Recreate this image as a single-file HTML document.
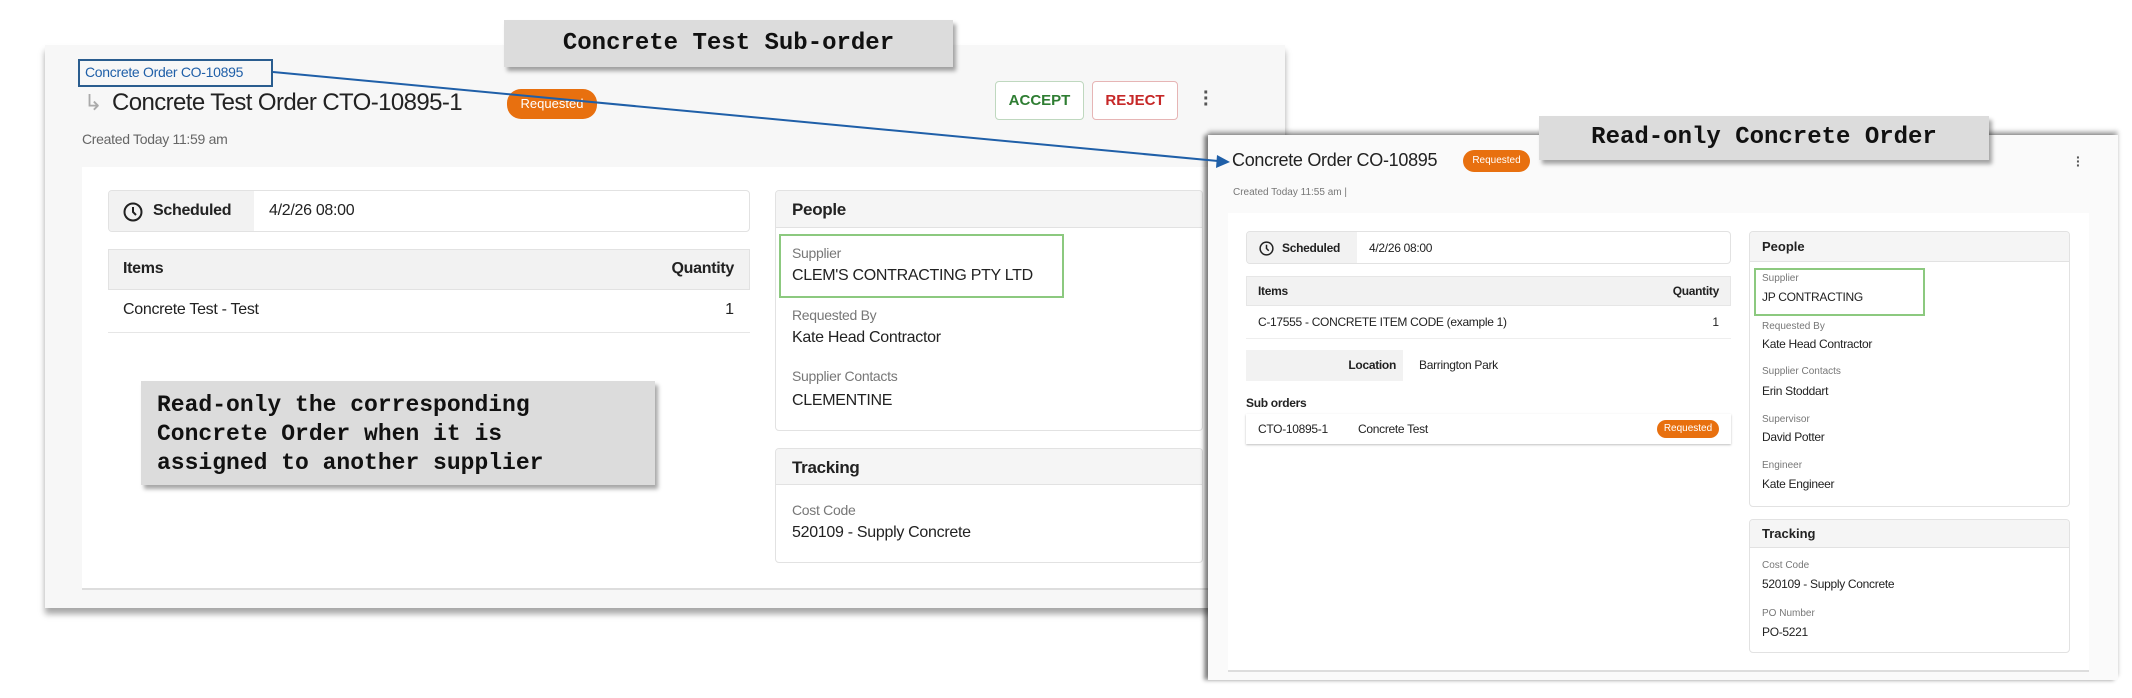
<!DOCTYPE html>
<html><head><meta charset="utf-8"><style>
*{box-sizing:border-box;margin:0;padding:0}
body{width:2132px;height:698px;background:#fff;position:relative;overflow:hidden;font-family:"Liberation Sans",sans-serif;color:#222}
.a{position:absolute}
.panel{background:#f7f7f7}
.card{background:#fff;border:1px solid #e2e2e2;border-radius:4px}
.note{background:#dcdcdc;font-family:"Liberation Mono",monospace;font-weight:bold;color:#111;box-shadow:3px 4px 4px rgba(0,0,0,.35)}
.badge{background:#e8700f;color:#fff;border-radius:14px;text-align:center}
.lbl{color:#777}
.hdr{background:#f5f5f5;border-bottom:1px solid #e2e2e2;font-weight:bold}
.c{letter-spacing:-0.3px}
</style></head><body>

<!-- LEFT PANEL -->
<div class="a panel" style="left:45px;top:45px;width:1240px;height:563px;box-shadow:0 6px 6px rgba(0,0,0,.35)"></div>
<div class="a" style="left:78px;top:59px;width:195px;height:28px;border:2px solid #2a5d8f"></div>
<div class="a c" style="left:85px;top:64px;font-size:14px;color:#1f5fa8">Concrete Order CO-10895</div>
<div class="a" style="left:84px;top:90px;font-size:22px;color:#aaa">↳</div>
<div class="a" style="left:112px;top:89px;font-size:24px;letter-spacing:-0.6px;color:#222">Concrete Test Order CTO-10895-1</div>
<div class="a badge" style="left:507px;top:89px;width:90px;height:30px;line-height:30px;font-size:13px">Requested</div>
<div class="a" style="left:995px;top:81px;width:89px;height:39px;border:1px solid #bfd8bf;border-radius:4px;color:#2e7d32;font-size:15px;text-align:center;line-height:37px;font-weight:bold;background:#fff">ACCEPT</div>
<div class="a" style="left:1092px;top:81px;width:86px;height:39px;border:1px solid #e6b5b5;border-radius:4px;color:#c62828;font-size:15px;text-align:center;line-height:37px;font-weight:bold;background:#fff">REJECT</div>
<div class="a" style="left:1203px;top:90px;width:4px;line-height:6px;font-size:20px;color:#555;font-weight:bold">·<br>·<br>·</div>
<div class="a c" style="left:82px;top:131px;font-size:14px;color:#666">Created Today 11:59 am</div>

<div class="a" style="left:82px;top:167px;width:1180px;height:423px;background:#fff;border-bottom:2px solid #ddd"></div>
<div class="a card" style="left:108px;top:190px;width:642px;height:42px;overflow:hidden">
 <div class="a" style="left:0;top:0;width:145px;height:42px;background:#f2f2f2"></div>
 <svg class="a" style="left:14px;top:11px" width="20" height="20" viewBox="0 0 20 20"><circle cx="10" cy="10" r="8.5" fill="none" stroke="#222" stroke-width="2"/><path d="M10 5v5l3 3" fill="none" stroke="#222" stroke-width="2"/></svg>
 <div class="a c" style="left:44px;top:11px;font-size:16px;font-weight:bold">Scheduled</div>
 <div class="a c" style="left:160px;top:11px;font-size:16px">4/2/26 08:00</div>
</div>
<div class="a" style="left:108px;top:249px;width:642px;height:41px;background:#f2f2f2;border:1px solid #e2e2e2"></div>
<div class="a c" style="left:123px;top:260px;font-size:16px;font-weight:bold">Items</div>
<div class="a c" style="left:600px;top:260px;width:134px;text-align:right;font-size:16px;font-weight:bold">Quantity</div>
<div class="a c" style="left:123px;top:301px;font-size:16px">Concrete Test - Test</div>
<div class="a" style="left:700px;top:301px;width:34px;text-align:right;font-size:16px">1</div>
<div class="a" style="left:108px;top:332px;width:642px;height:1px;background:#e6e6e6"></div>

<div class="a note" style="left:141px;top:381px;width:514px;height:104px;padding:10px 16px;font-size:23px;line-height:29px">Read-only the corresponding<br>Concrete Order when it is<br>assigned to another supplier</div>

<div class="a card" style="left:775px;top:190px;width:428px;height:241px;overflow:hidden">
 <div class="a hdr c" style="left:0;top:0;width:428px;height:37px;padding:9px 16px;font-size:17px">People</div>
</div>
<div class="a" style="left:779px;top:234px;width:285px;height:64px;border:2px solid #8cc97f"></div>
<div class="a lbl c" style="left:792px;top:245px;font-size:14px">Supplier</div>
<div class="a c" style="left:792px;top:267px;font-size:16px">CLEM'S CONTRACTING PTY LTD</div>
<div class="a lbl c" style="left:792px;top:307px;font-size:14px">Requested By</div>
<div class="a c" style="left:792px;top:329px;font-size:16px">Kate Head Contractor</div>
<div class="a lbl c" style="left:792px;top:368px;font-size:14px">Supplier Contacts</div>
<div class="a c" style="left:792px;top:392px;font-size:16px">CLEMENTINE</div>
<div class="a card" style="left:775px;top:448px;width:428px;height:115px;overflow:hidden">
 <div class="a hdr c" style="left:0;top:0;width:428px;height:36px;padding:9px 16px;font-size:17px">Tracking</div>
</div>
<div class="a lbl c" style="left:792px;top:502px;font-size:14px">Cost Code</div>
<div class="a c" style="left:792px;top:524px;font-size:16px">520109 - Supply Concrete</div>

<div class="a note" style="left:504px;top:20px;width:449px;height:47px;text-align:center;line-height:47px;font-size:24px">Concrete Test Sub-order</div>

<!-- RIGHT PANEL -->
<div class="a panel" style="left:1208px;top:135px;width:910px;height:545px;box-shadow:-4px 0 4px rgba(0,0,0,.45), 0 -4px 4px rgba(0,0,0,.25);background:#fafafa"></div>
<div class="a c" style="left:1232px;top:150px;font-size:18px">Concrete Order CO-10895</div>
<div class="a badge" style="left:1463px;top:150px;width:67px;height:22px;line-height:22px;font-size:10px">Requested</div>
<div class="a" style="left:2076px;top:155px;width:4px;line-height:4px;font-size:14px;color:#555;font-weight:bold">·<br>·<br>·</div>
<div class="a" style="left:1233px;top:187px;font-size:10px;color:#777">Created Today 11:55 am | </div>
<div class="a" style="left:1228px;top:213px;width:861px;height:459px;background:#fff;border-bottom:2px solid #ddd"></div>
<div class="a card" style="left:1246px;top:231px;width:485px;height:33px;overflow:hidden">
 <div class="a" style="left:0;top:0;width:110px;height:33px;background:#f2f2f2"></div>
 <svg class="a" style="left:12px;top:9px" width="15" height="15" viewBox="0 0 20 20"><circle cx="10" cy="10" r="8.5" fill="none" stroke="#222" stroke-width="2"/><path d="M10 5v5l3 3" fill="none" stroke="#222" stroke-width="2"/></svg>
 <div class="a c" style="left:35px;top:9px;font-size:12px;font-weight:bold">Scheduled</div>
 <div class="a c" style="left:122px;top:9px;font-size:12px">4/2/26 08:00</div>
</div>
<div class="a" style="left:1246px;top:276px;width:485px;height:30px;background:#f2f2f2;border:1px solid #e6e6e6"></div>
<div class="a c" style="left:1258px;top:284px;font-size:12px;font-weight:bold">Items</div>
<div class="a c" style="left:1625px;top:284px;width:94px;text-align:right;font-size:12px;font-weight:bold">Quantity</div>
<div class="a c" style="left:1258px;top:315px;font-size:12px">C-17555 - CONCRETE ITEM CODE (example 1)</div>
<div class="a" style="left:1695px;top:315px;width:24px;text-align:right;font-size:12px">1</div>
<div class="a" style="left:1246px;top:338px;width:485px;height:1px;background:#eee"></div>
<div class="a" style="left:1246px;top:350px;width:157px;height:31px;background:#f2f2f2"></div>
<div class="a c" style="left:1246px;top:358px;width:150px;text-align:right;font-size:12px;font-weight:bold">Location</div>
<div class="a c" style="left:1419px;top:358px;font-size:12px">Barrington Park</div>
<div class="a c" style="left:1246px;top:396px;font-size:12px;font-weight:bold">Sub orders</div>
<div class="a" style="left:1246px;top:414px;width:485px;height:30px;background:#fff;box-shadow:0 1px 2px rgba(0,0,0,.25)"></div>
<div class="a c" style="left:1258px;top:422px;font-size:12px">CTO-10895-1</div>
<div class="a c" style="left:1358px;top:422px;font-size:12px">Concrete Test</div>
<div class="a badge" style="left:1657px;top:420px;width:62px;height:18px;line-height:18px;font-size:10px">Requested</div>

<div class="a card" style="left:1749px;top:231px;width:321px;height:276px;overflow:hidden">
 <div class="a hdr" style="left:0;top:0;width:321px;height:30px;padding:7px 12px;font-size:13px">People</div>
</div>
<div class="a" style="left:1754px;top:268px;width:171px;height:48px;border:2px solid #8cc97f"></div>
<div class="a lbl" style="left:1762px;top:273px;font-size:10px">Supplier</div>
<div class="a c" style="left:1762px;top:290px;font-size:12px">JP CONTRACTING</div>
<div class="a lbl" style="left:1762px;top:321px;font-size:10px">Requested By</div>
<div class="a c" style="left:1762px;top:337px;font-size:12px">Kate Head Contractor</div>
<div class="a lbl" style="left:1762px;top:366px;font-size:10px">Supplier Contacts</div>
<div class="a c" style="left:1762px;top:384px;font-size:12px">Erin Stoddart</div>
<div class="a lbl" style="left:1762px;top:414px;font-size:10px">Supervisor</div>
<div class="a c" style="left:1762px;top:430px;font-size:12px">David Potter</div>
<div class="a lbl" style="left:1762px;top:460px;font-size:10px">Engineer</div>
<div class="a c" style="left:1762px;top:477px;font-size:12px">Kate Engineer</div>
<div class="a card" style="left:1749px;top:519px;width:321px;height:134px;overflow:hidden">
 <div class="a hdr" style="left:0;top:0;width:321px;height:28px;padding:6px 12px;font-size:13px">Tracking</div>
</div>
<div class="a lbl" style="left:1762px;top:560px;font-size:10px">Cost Code</div>
<div class="a c" style="left:1762px;top:577px;font-size:12px">520109 - Supply Concrete</div>
<div class="a lbl" style="left:1762px;top:608px;font-size:10px">PO Number</div>
<div class="a c" style="left:1762px;top:625px;font-size:12px">PO-5221</div>

<div class="a note" style="left:1539px;top:116px;width:450px;height:44px;text-align:center;line-height:44px;font-size:24px">Read-only Concrete Order</div>

<svg class="a" style="left:0;top:0" width="2132" height="698"><line x1="273" y1="72" x2="1218" y2="161" stroke="#1f5fa8" stroke-width="2"/><polygon points="1230,162 1217,155 1216,168" fill="#1f5fa8"/></svg>
</body></html>
